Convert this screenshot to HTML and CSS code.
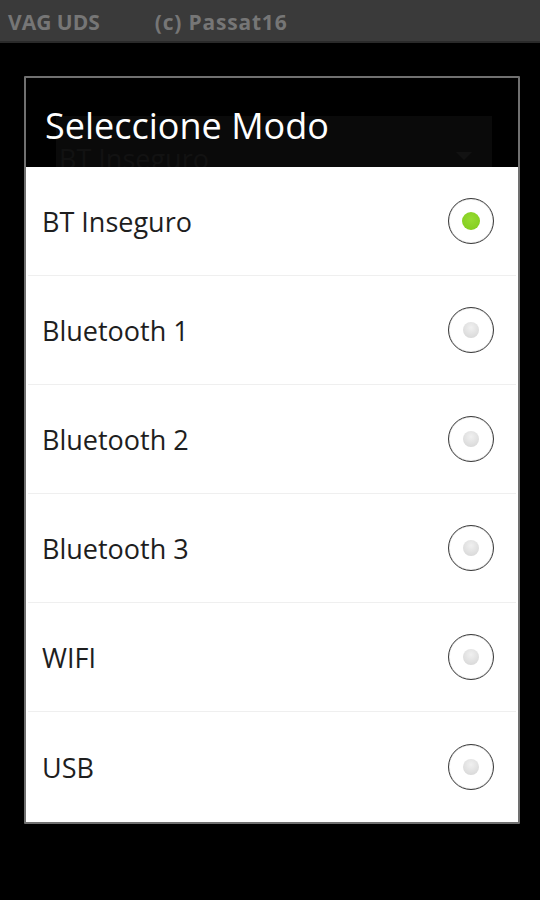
FILE: index.html
```html
<!DOCTYPE html>
<html>
<head>
<meta charset="utf-8">
<link rel="stylesheet" href="styles.css">
</head>
<body>
<div class="topbar">
  <span class="app">VAG UDS</span>
  <span class="copy">(c) Passat16</span>
</div>
<div class="stage">
  <div class="dialog">
    <div class="head">
      <div class="ghost"><span class="ghost-text">BT Inseguro</span><span class="ghost-arrow"></span></div>
      <div class="title">Seleccione Modo</div>
    </div>
    <ul class="list">
      <li class="row"><span class="label">BT Inseguro</span><span class="radio on"></span></li>
      <li class="row"><span class="label">Bluetooth 1</span><span class="radio"></span></li>
      <li class="row"><span class="label">Bluetooth 2</span><span class="radio"></span></li>
      <li class="row"><span class="label">Bluetooth 3</span><span class="radio"></span></li>
      <li class="row"><span class="label">WIFI</span><span class="radio"></span></li>
      <li class="row"><span class="label">USB</span><span class="radio"></span></li>
    </ul>
  </div>
</div>
</body>
</html>
```
FILE: styles.css
```css
html, body {
  margin: 0;
  padding: 0;
  background: #000;
  width: 540px;
  height: 900px;
  overflow: hidden;
  font-family: "Open Sans", "Noto Sans", sans-serif;
}
.topbar {
  height: 41px;
  background: #3a3a3a;
  border-bottom: 2px solid #2a2a2a;
  display: flex;
  align-items: center;
  padding-left: 8px;
}
.app, .copy {
  color: #767676;
  font-weight: bold;
  font-size: 21px;
  font-family: "Open Sans", sans-serif;
  margin-top: 2px;
}
.copy {
  margin-left: 55px;
  letter-spacing: 0.8px;
}
.stage {
  padding: 33px 0 0 24px;
}
.dialog {
  width: 492px;
  border: 2px solid #707070;
  border-radius: 1px;
  background: #000;
}
.head {
  height: 89px;
  position: relative;
  background: #000;
}
.ghost {
  position: absolute;
  left: 30px;
  top: 38px;
  width: 436px;
  height: 51px;
  background: #0a0a0a;
  overflow: hidden;
}
.ghost-text {
  position: absolute;
  left: 3px;
  top: 31px;
  color: #121212;
  font-size: 27px;
  line-height: 24px;
}
.ghost-arrow {
  position: absolute;
  right: 20px;
  top: 36px;
  width: 0;
  height: 0;
  border-left: 8px solid transparent;
  border-right: 8px solid transparent;
  border-top: 8px solid #121212;
}
.title {
  position: absolute;
  left: 19px;
  top: 30px;
  color: #fff;
  font-size: 36px;
  line-height: 36px;
}
.list {
  list-style: none;
  margin: 0;
  padding: 0;
  background: #fff;
}
.row {
  height: 108px;
  display: flex;
  align-items: center;
  justify-content: space-between;
  padding: 0 22px 0 14px;
  border-bottom: 1px solid #efefef;
  margin: 0 2px;
}
.row:last-child {
  border-bottom: none;
  height: 110px;
}
.label {
  color: #1e1e1e;
  font-size: 27px;
  margin-top: 1px;
}
.radio {
  width: 44px;
  height: 44px;
  border: 1.6px solid #3a3a3a;
  border-radius: 50%;
  display: flex;
  align-items: center;
  justify-content: center;
  box-shadow: inset 0 0 1px #999;
  margin-top: -1px;
}
.radio::after {
  content: "";
  width: 16px;
  height: 16px;
  border-radius: 50%;
  background: radial-gradient(circle at 50% 35%, #f0f0f0 0%, #dcdcdc 70%, #cfcfcf 100%);
}
.radio.on::after {
  width: 18px;
  height: 18px;
  background: radial-gradient(circle at 50% 40%, #97dc32 0%, #86cf22 70%, #74b81a 100%);
}
```
